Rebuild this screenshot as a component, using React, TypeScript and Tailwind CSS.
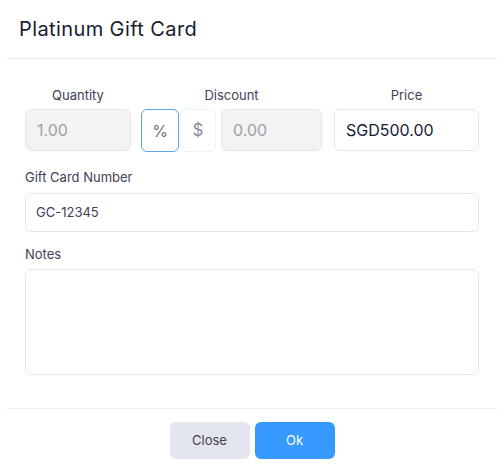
import React from "react";

export default function App() {
  const font = { fontFamily: "Inter, 'Noto Sans', sans-serif" };
  return (
    <div className="w-[504px] h-[474px] bg-white flex flex-col" style={font}>
      <div className="h-[58px] flex items-center px-[19px]">
        <h1 className="text-[20px] leading-[24px] text-[#181c32] font-normal tracking-[0.4px]">Platinum Gift Card</h1>
      </div>
      <div className="mx-[7px] border-t border-[#ebedf3]" />
      <div className="pl-[25px] pr-[25px] pt-[26px] flex-1 flex flex-col">
        <div className="flex items-start">
          <div className="w-[106px] flex flex-col">
            <div className="h-[20px] leading-[20px] text-[13px] text-[#3f4254] text-center">Quantity</div>
            <div className="mt-[4px] h-[42px] rounded-[6px] border border-[#e4e6ef] bg-[#f3f3f4] flex items-center pl-[11px] text-[16px] text-[#a0a0a8]">1.00</div>
          </div>
          <div className="ml-[10px] w-[181px] flex flex-col">
            <div className="h-[20px] leading-[20px] text-[13px] text-[#3f4254] text-center">Discount</div>
            <div className="mt-[4px] flex h-[43px]">
              <div className="w-[38px] h-[43px] rounded-[6px] border border-[#5ea6e6] flex items-center justify-center text-[16px] text-[#6f7280]">%</div>
              <div className="ml-[1px] w-[36px] h-[43px] rounded-[6px] border border-[#f1f2f6] flex items-center justify-center text-[17px] text-[#8a8d99]">$</div>
              <div className="ml-[5px] w-[101px] h-[42px] rounded-[6px] border border-[#e4e6ef] bg-[#f3f3f4] flex items-center pl-[11px] text-[16px] text-[#a0a0a8]">0.00</div>
            </div>
          </div>
          <div className="ml-[12px] w-[145px] flex flex-col">
            <div className="h-[20px] leading-[20px] text-[13px] text-[#3f4254] text-center">Price</div>
            <div className="mt-[4px] h-[42px] rounded-[6px] border border-[#e4e6ef] bg-white flex items-center pl-[11px] text-[16px] text-[#181c32]">SGD500.00</div>
          </div>
        </div>
        <div className="mt-[15px] h-[20px] leading-[20px] text-[13px] text-[#3f4254]">Gift Card Number</div>
        <div className="mt-[6px] h-[39px] rounded-[6px] border border-[#e4e6ef] bg-white flex items-center pl-[10px] text-[13px] text-[#3f4254]">GC-12345</div>
        <div className="mt-[12px] h-[20px] leading-[20px] text-[13px] text-[#3f4254]">Notes</div>
        <div className="mt-[5px] h-[106px] rounded-[6px] border border-[#e4e6ef] bg-white" />
      </div>
      <div className="mx-[7px] border-t border-[#ebedf3]" />
      <div className="pt-[13px] pb-[15px] flex justify-center gap-[5px]">
        <button className="w-[80px] h-[37px] rounded-[6px] bg-[#e4e6ef] text-[13px] text-[#3f4254]">Close</button>
        <button className="w-[80px] h-[37px] rounded-[6px] bg-[#3699ff] text-[13px] text-white">Ok</button>
      </div>
    </div>
  );
}
